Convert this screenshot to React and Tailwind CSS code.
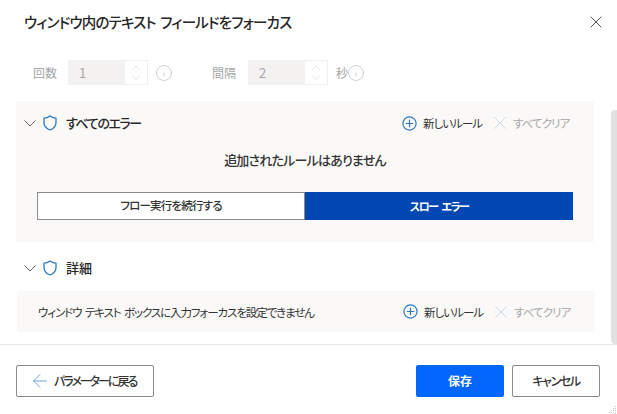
import { ChevronDown, ChevronUp, X, Info, ArrowLeft } from 'lucide-react';

const palt = "[font-feature-settings:'palt']";

// shield outline used on both section headers
function Shield() {
  return (
    <svg width="14" height="16" viewBox="0 0 14 16" fill="none" className="shrink-0">
      <path d="M7 1 C5 2.6 3 3.2 1 3.2 V7.5 C1 11 3.4 13.6 7 15 C10.6 13.6 13 11 13 7.5 V3.2 C11 3.2 9 2.6 7 1 Z" stroke="#2b78c5" strokeWidth="1.3" strokeLinejoin="round" />
    </svg>
  );
}

function Caret() {
  return (
    <svg width="12" height="7" viewBox="0 0 12 7" fill="none" className="shrink-0">
      <path d="M0.5 0.5 L6 6 L11.5 0.5" stroke="#666" strokeWidth="1" />
    </svg>
  );
}

function PlusCircle() {
  return (
    <svg width="15" height="15" viewBox="0 0 15 15" fill="none" className="shrink-0">
      <circle cx="7.5" cy="7.5" r="6.6" stroke="#2b78c5" strokeWidth="1.2" />
      <path d="M7.5 3.8 V11.2 M3.8 7.5 H11.2" stroke="#2b78c5" strokeWidth="1.2" />
    </svg>
  );
}

function RuleActions() {
  return (
    <div className="flex items-center">
      <PlusCircle />
      <span className="ml-[6px] w-[57px] text-[11.5px] leading-4 tracking-[-0.95px] text-[#333] whitespace-nowrap">新しいルール</span>
      <X size={22} strokeWidth={0.8} className="ml-[9px] text-[#b5cdea]" />
      <span className="ml-[2px] w-[56px] text-[11.5px] leading-4 tracking-[-0.9px] text-[#a6a6a6] whitespace-nowrap">すべてクリア</span>
    </div>
  );
}

function NumberField({ value }) {
  return (
    <div className="flex h-[25px] w-[80px]">
      <div className="w-[57px] bg-[#f3f2f1] pl-[11px] text-[13px] leading-[25px] text-[#a6a6a6]">{value}</div>
      <div className="flex w-[23px] flex-col items-center justify-center border border-l-0 border-[#efefef] bg-white text-[#c8c8c8]">
        <ChevronUp size={16} strokeWidth={0.9} className="-mb-[3px]" />
        <ChevronDown size={16} strokeWidth={0.9} className="-mt-[1px]" />
      </div>
    </div>
  );
}

export default function App() {
  return (
    <div className={`relative flex h-[414px] w-[617px] flex-col overflow-hidden bg-white font-['Noto_Sans_CJK_JP',sans-serif] ${palt}`}>
      <div className="flex h-[44px] shrink-0 items-center justify-between pl-[24px] pr-[11px]">
        <h1 className="text-[14.5px] font-medium leading-6 tracking-[-0.8px] [word-spacing:2px] text-[#262626]">ウィンドウ内のテキスト フィールドをフォーカス</h1>
        <X size={20} strokeWidth={1} className="text-[#333]" />
      </div>

      <div className="flex h-[301px] shrink-0 border-b border-[#e8e8e8]">
        <div className="w-[611px] shrink-0">
          <div className="mt-[16px] flex h-[25px] items-center pl-[33px] text-[12px] text-[#a6a6a6]">
            <span className="w-[35px]">回数</span>
            <NumberField value="1" />
            <Info size={18} strokeWidth={0.8} className="ml-[7px] text-[#b4b4b4]" />
            <span className="ml-[39px] w-[36px]">間隔</span>
            <NumberField value="2" />
            <span className="ml-[8px] w-[11px]">秒</span>
            <Info size={18} strokeWidth={0.8} className="text-[#b4b4b4]" />
          </div>

          <section className="ml-[16px] mt-[16px] h-[141px] w-[578px] bg-[#faf9f8]">
            <div className="flex h-[44px] items-center justify-between pl-[8px] pr-[25px]">
              <div className="flex items-center">
                <Caret />
                <span className="ml-[7px]"><Shield /></span>
                <span className="ml-[9px] text-[13px] font-medium leading-5 tracking-[-1.4px] text-[#262626]">すべてのエラー</span>
              </div>
              <RuleActions />
            </div>
            <p className="mt-[5px] text-center text-[13px] font-medium leading-5 tracking-[-0.8px] text-[#333]">追加されたルールはありません</p>
            <div className="ml-[21px] mt-[22px] flex h-[28px] w-[536px]">
              <div className="flex w-[268px] items-center justify-center border border-[#8a8a8a] bg-white text-[11.5px] font-medium tracking-[-0.8px] text-[#333]">フロー実行を続行する</div>
              <div className="flex flex-1 items-center justify-center bg-[#0047b3] text-[11px] font-bold tracking-[-1.5px] [word-spacing:3px] text-white">スロー エラー</div>
            </div>
          </section>

          <div className="mt-[16px] flex h-[20px] items-center pl-[24px]">
            <Caret />
            <span className="ml-[7px]"><Shield /></span>
            <span className="ml-[9px] text-[13px] font-medium leading-5 text-[#262626]">詳細</span>
          </div>

          <section className="ml-[17px] mt-[13px] flex h-[41px] w-[578px] items-center justify-between bg-[#faf9f8] pl-[21px] pr-[25px]">
            <span className="text-[11.5px] leading-4 tracking-[-1.1px] [word-spacing:2px] text-[#333]">ウィンドウ テキスト ボックスに入力フォーカスを設定できません</span>
            <RuleActions />
          </section>
        </div>
        <div className="ml-auto mt-[66px] w-[6px] rounded-l-[4px] bg-[#e1e1e1]" />
      </div>

      <div className="flex flex-1 items-start justify-between pl-[16px] pr-[17px] pt-[20px]">
        <button className="flex h-[32px] w-[138px] items-center justify-start rounded-[2px] border border-[#8a8a8a] bg-white pl-[16px]">
          <ArrowLeft size={22} strokeWidth={0.9} className="-mx-[4px] text-[#4a90e2]" />
          <span className="ml-[7px] text-[12px] font-medium tracking-[-2px] text-[#333]">パラメーターに戻る</span>
        </button>
        <div className="flex gap-[8px]">
          <button className="h-[32px] w-[88px] rounded-[2px] bg-[#0066ff] text-[12px] font-bold text-white">保存</button>
          <button className="h-[32px] w-[88px] rounded-[2px] border border-[#8a8a8a] bg-white text-[12px] font-medium tracking-[-1.4px] text-[#333]">キャンセル</button>
        </div>
      </div>

      {/* resize grip */}
      <svg width="9" height="9" viewBox="0 0 9 9" className="absolute bottom-0 right-0" fill="#c4c4c4">
        <rect x="7" y="1" width="1" height="1" />
        <rect x="5" y="3" width="1" height="1" />
        <rect x="7" y="3" width="1" height="1" />
        <rect x="3" y="5" width="1" height="1" />
        <rect x="5" y="5" width="1" height="1" />
        <rect x="7" y="5" width="1" height="1" />
        <rect x="1" y="7" width="1" height="1" />
        <rect x="3" y="7" width="1" height="1" />
        <rect x="5" y="7" width="1" height="1" />
        <rect x="7" y="7" width="1" height="1" />
      </svg>
    </div>
  );
}
